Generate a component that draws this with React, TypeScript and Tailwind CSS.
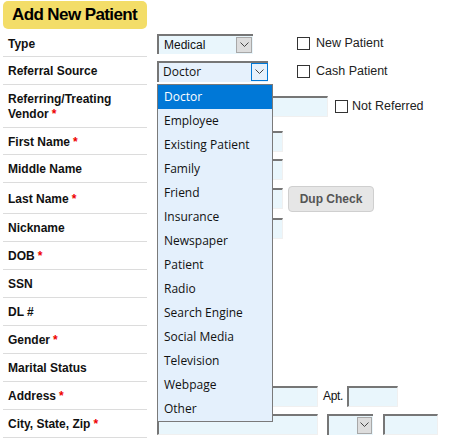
import React from "react";

const options = [
  "Doctor",
  "Employee",
  "Existing Patient",
  "Family",
  "Friend",
  "Insurance",
  "Newspaper",
  "Patient",
  "Radio",
  "Search Engine",
  "Social Media",
  "Television",
  "Webpage",
  "Other",
];

function Chevron() {
  return (
    <svg width="9" height="6" viewBox="0 0 9 6">
      <polyline points="0.5,0.5 4.5,4.5 8.5,0.5" fill="none" stroke="#444" strokeWidth="1" />
    </svg>
  );
}

function TextInput({ w }: { w: string }) {
  return (
    <div
      className={`${w} h-[21px] bg-[#e9f6fc] border-t-2 border-l-2 border-t-[#767676] border-l-[#767676] border-r border-b border-r-[#f0f0f0] border-b-[#f0f0f0]`}
    />
  );
}

function Checkbox({ label }: { label: string }) {
  return (
    <div className="flex items-center">
      <div className="w-[13px] h-[13px] border border-[#333] bg-white" />
      <span className="ml-[6px] text-[12.5px] text-[#222]">{label}</span>
    </div>
  );
}

function Row({
  label,
  req,
  h,
  children,
}: {
  label: React.ReactNode;
  req?: boolean;
  h: string;
  children?: React.ReactNode;
}) {
  return (
    <div className="flex">
      <div
        className={`w-[144px] ${h} border-b border-[#dcdcdc] flex items-center pl-[5px] pt-[2px] text-[12px] font-bold text-[#111] leading-[15px]`}
      >
        <div>
          {label}
          {req && <span className="text-[#e00] ml-[3px]">*</span>}
        </div>
      </div>
      <div className="ml-[10px] flex items-center">{children}</div>
    </div>
  );
}

export default function App() {
  return (
    <div className="w-[462px] h-[440px] bg-white overflow-hidden pl-[3px] font-['Liberation_Sans',Arial,sans-serif]">
      <div className="pt-[1px] h-[30px]">
        <div className="w-[144px] h-[28px] rounded-[5px] bg-[#f3dd68] flex items-center pl-[9px]">
          <span className="text-[17px] font-bold text-black tracking-[-0.6px]">Add New Patient</span>
        </div>
      </div>

      <Row label="Type" h="h-[27px]">
        <div className="w-[140px]">
          <div className="w-[96px] h-[20px] bg-[#e9f6fc] border-t-2 border-l-2 border-t-[#767676] border-l-[#767676] flex items-center justify-between">
            <span className="ml-[5px] text-[12px] text-[#111]">Medical</span>
            <div className="w-[16px] h-[16px] mr-[1px] bg-[#dddddd] border border-[#a8a8a8] flex items-center justify-center">
              <Chevron />
            </div>
          </div>
        </div>
        <Checkbox label="New Patient" />
      </Row>

      <Row label="Referral Source" h="h-[28px]">
        <div className="w-[140px]">
          <div className="relative z-10 w-[111px] h-[21px] bg-[#e6f1fc] border-t-2 border-l-2 border-t-[#767676] border-l-[#767676] flex items-center justify-between">
            <span className="ml-[4px] text-[12px] text-[#111] font-['Open_Sans',sans-serif]">Doctor</span>
            <div className="w-[17px] h-[18px] bg-[#e6f1fc] border border-[#0078d7] flex items-center justify-center">
              <Chevron />
            </div>
            <div className="absolute left-[-2px] top-[21px] w-[116px] border border-[#7a7a7a] bg-[#e4f0fc] font-['Open_Sans',sans-serif] text-[12px] text-[#111]">
              {options.map((o, i) => (
                <div
                  key={o}
                  className={
                    i === 0
                      ? "h-[24px] flex items-center pl-[6px] bg-[#0078d7] text-white"
                      : "h-[24px] flex items-center pl-[6px]"
                  }
                >
                  {o}
                </div>
              ))}
            </div>
          </div>
        </div>
        <Checkbox label="Cash Patient" />
      </Row>

      <Row
        label={
          <>
            Referring/Treating
            <br />
            Vendor
          </>
        }
        req
        h="h-[43px]"
      >
        <TextInput w="w-[171px]" />
        <div className="ml-[7px]">
          <div className="flex items-center">
            <div className="w-[13px] h-[13px] border border-[#333] bg-white" />
            <span className="ml-[4px] text-[12.5px] text-[#222]">Not Referred</span>
          </div>
        </div>
      </Row>

      <Row label="First Name" req h="h-[27px]">
        <TextInput w="w-[126px]" />
      </Row>
      <Row label="Middle Name" h="h-[28px]">
        <TextInput w="w-[126px]" />
      </Row>
      <Row label="Last Name" req h="h-[31px]">
        <TextInput w="w-[126px]" />
        <div className="ml-[5px] w-[86px] h-[26px] rounded-[4px] bg-[#e6e6e6] border border-[#cfcfcf] flex items-center justify-center text-[12px] font-bold text-[#555]">
          Dup Check
        </div>
      </Row>
      <Row label="Nickname" h="h-[28px]">
        <TextInput w="w-[126px]" />
      </Row>
      <Row label="DOB" req h="h-[28px]">
        <TextInput w="w-[100px]" />
      </Row>
      <Row label="SSN" h="h-[28px]">
        <TextInput w="w-[100px]" />
      </Row>
      <Row label="DL #" h="h-[28px]">
        <TextInput w="w-[100px]" />
      </Row>
      <Row label="Gender" req h="h-[28px]">
        <TextInput w="w-[100px]" />
      </Row>
      <Row label="Marital Status" h="h-[28px]">
        <TextInput w="w-[100px]" />
      </Row>
      <Row label="Address" req h="h-[28px]">
        <TextInput w="w-[161px]" />
        <span className="ml-[5px] text-[12px] text-[#111] tracking-[-0.3px]">Apt.</span>
        <div className="ml-[4px]">
          <TextInput w="w-[51px]" />
        </div>
      </Row>
      <Row label="City, State, Zip" req h="h-[28px]">
        <TextInput w="w-[161px]" />
        <div className="ml-[9px] w-[46px] h-[21px] bg-[#e9f6fc] border-t-2 border-l-2 border-t-[#767676] border-l-[#767676] flex items-center justify-end">
          <div className="w-[15px] h-[17px] mr-[1px] bg-[#dddddd] border border-[#a8a8a8] flex items-center justify-center">
            <Chevron />
          </div>
        </div>
        <div className="ml-[10px]">
          <TextInput w="w-[55px]" />
        </div>
      </Row>
    </div>
  );
}
